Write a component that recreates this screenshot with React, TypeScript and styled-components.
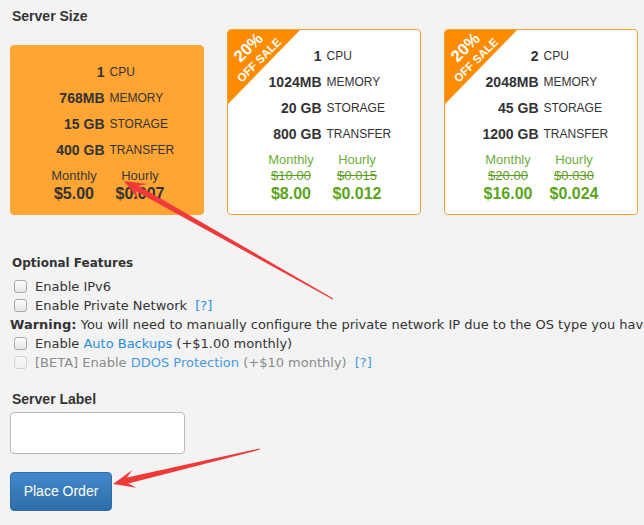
import React from 'react';
import styled, { createGlobalStyle } from 'styled-components';

type Plan = {
  cpu: string;
  memory: string;
  storage: string;
  transfer: string;
  monthly: string;
  hourly: string;
  oldMonthly?: string;
  oldHourly?: string;
};

const plans: Plan[] = [
  { cpu: '1', memory: '768MB', storage: '15 GB', transfer: '400 GB', monthly: '$5.00', hourly: '$0.007' },
  {
    cpu: '1',
    memory: '1024MB',
    storage: '20 GB',
    transfer: '800 GB',
    monthly: '$8.00',
    hourly: '$0.012',
    oldMonthly: '$10.00',
    oldHourly: '$0.015',
  },
  {
    cpu: '2',
    memory: '2048MB',
    storage: '45 GB',
    transfer: '1200 GB',
    monthly: '$16.00',
    hourly: '$0.024',
    oldMonthly: '$20.00',
    oldHourly: '$0.030',
  },
];

type Pt = [number, number];

// tapered annotation arrow, thin at the tail and wide at the head
const arrowPoints = (tail: Pt, tip: Pt): string => {
  const dx = tip[0] - tail[0];
  const dy = tip[1] - tail[1];
  const len = Math.sqrt(dx * dx + dy * dy);
  const d: Pt = [dx / len, dy / len];
  const n: Pt = [-d[1], d[0]];
  const at = (p: Pt, back: number, side: number): string =>
    `${(p[0] - d[0] * back + n[0] * side).toFixed(1)},${(p[1] - d[1] * back + n[1] * side).toFixed(1)}`;
  return [
    at(tail, 0, 0.6),
    at(tip, 15, 3),
    at(tip, 22, 9),
    at(tip, 0, 0),
    at(tip, 22, -9),
    at(tip, 15, -3),
    at(tail, 0, -0.6),
  ].join(' ');
};

const App: React.FC = () => {
  return (
    <>
      <GlobalStyle />
      <Page>
        <SizeTitle>Server Size</SizeTitle>
        <CardRow>
          {plans.map((plan, i) => {
            const sale = !!plan.oldMonthly;
            return (
              <Card key={i} selected={!sale}>
                {sale && (
                  <Ribbon width="80" height="80" viewBox="0 0 80 80">
                    <polygon points="0,0 72,0 0,74" fill="#ff8b00" />
                    <text
                      x="20"
                      y="17"
                      fill="#fff"
                      fontSize="16.5"
                      fontWeight="bold"
                      textAnchor="middle"
                      dominantBaseline="central"
                      transform="rotate(-45 20 17)"
                    >
                      20%
                    </text>
                    <text
                      x="31"
                      y="30"
                      fill="#fff"
                      fontSize="11.5"
                      fontWeight="bold"
                      textAnchor="middle"
                      dominantBaseline="central"
                      transform="rotate(-45 31 30)"
                    >
                      OFF SALE
                    </text>
                  </Ribbon>
                )}
                <Specs>
                  <SpecValue>{plan.cpu}</SpecValue>
                  <SpecName>CPU</SpecName>
                  <SpecValue>{plan.memory}</SpecValue>
                  <SpecName>MEMORY</SpecName>
                  <SpecValue>{plan.storage}</SpecValue>
                  <SpecName>STORAGE</SpecName>
                  <SpecValue>{plan.transfer}</SpecValue>
                  <SpecName>TRANSFER</SpecName>
                </Specs>
                <Prices>
                  <PriceCol>
                    <PriceLabel sale={sale}>Monthly</PriceLabel>
                    {sale && <OldPrice>{plan.oldMonthly}</OldPrice>}
                    <Price sale={sale}>{plan.monthly}</Price>
                  </PriceCol>
                  <PriceCol>
                    <PriceLabel sale={sale}>Hourly</PriceLabel>
                    {sale && <OldPrice>{plan.oldHourly}</OldPrice>}
                    <Price sale={sale}>{plan.hourly}</Price>
                  </PriceCol>
                </Prices>
              </Card>
            );
          })}
        </CardRow>

        <SectionTitle>Optional Features</SectionTitle>
        <Options>
          <Option>
            <Check type="checkbox" />
            Enable IPv6
          </Option>
          <Option>
            <Check type="checkbox" />
            Enable Private Network<Help href="#">[?]</Help>
          </Option>
          <Warning>
            <b>Warning:</b> You will need to manually configure the private network IP due to the OS type you have
            selected.
          </Warning>
          <Option>
            <Check type="checkbox" />
            Enable&nbsp;<Link href="#">Auto Backups</Link>&nbsp;(+$1.00 monthly)
          </Option>
          <Option disabled>
            <Check type="checkbox" disabled />
            [BETA] Enable&nbsp;<Link href="#">DDOS Protection</Link>&nbsp;(+$10 monthly)
            <Help href="#">[?]</Help>
          </Option>
        </Options>

        <LabelTitle>Server Label</LabelTitle>
        <LabelInput type="text" />
        <OrderButton>Place Order</OrderButton>

        <Arrows width="644" height="525" viewBox="0 0 644 525">
          <polygon points={arrowPoints([333, 299], [124, 181])} fill="#f03a3a" />
          <polygon points={arrowPoints([260, 449], [113, 484])} fill="#f03a3a" />
        </Arrows>
      </Page>
    </>
  );
};

const GlobalStyle = createGlobalStyle`
  html, body {
    margin: 0;
    background: #f3f3f3;
    overflow: hidden;
  }
  body {
    font-family: "Liberation Sans", Arial, sans-serif;
    color: #333333;
  }
`;

const Page = styled.div`
  position: relative;
  width: 644px;
  height: 525px;
  box-sizing: border-box;
  padding: 6px 0 0 10px;
  overflow: hidden;
`;

const SizeTitle = styled.div`
  font-size: 14px;
  font-weight: bold;
  line-height: 20px;
  margin: 0 0 3px 2px;
`;

const CardRow = styled.div`
  display: flex;
  align-items: flex-end;
  gap: 23px;
`;

const Card = styled.div<{ selected: boolean }>`
  position: relative;
  overflow: hidden;
  width: 194px;
  box-sizing: border-box;
  padding: 13px 0 10px;
  border-radius: 4px;
  border: 1px solid ${p => (p.selected ? '#ffa534' : '#f4a232')};
  background: ${p => (p.selected ? '#ffa534' : '#ffffff')};
`;

const Ribbon = styled.svg`
  position: absolute;
  top: 0;
  left: 0;
  font-family: "Liberation Sans", Arial, sans-serif;
`;

const Specs = styled.div`
  display: grid;
  grid-template-columns: 1fr 1fr;
  column-gap: 5px;
  align-items: center;
`;

const SpecValue = styled.span`
  text-align: right;
  font-size: 14px;
  font-weight: bold;
  line-height: 26px;
  color: #333333;
`;

const SpecName = styled.span`
  text-align: left;
  font-size: 12px;
  line-height: 26px;
  color: #333333;
`;

const Prices = styled.div`
  display: grid;
  grid-template-columns: 66px 66px;
  justify-content: center;
  margin-top: 5px;
`;

const PriceCol = styled.div`
  display: flex;
  flex-direction: column;
  align-items: center;
`;

const PriceLabel = styled.span<{ sale: boolean }>`
  font-size: 13px;
  line-height: 16px;
  color: ${p => (p.sale ? '#6cae3c' : '#3a3a3a')};
`;

const OldPrice = styled.s`
  font-size: 13px;
  line-height: 16px;
  color: #5b9e1c;
`;

const Price = styled.span<{ sale: boolean }>`
  font-size: 16px;
  font-weight: bold;
  line-height: 20px;
  color: ${p => (p.sale ? '#5aa51b' : '#333333')};
  white-space: nowrap;
`;

const SectionTitle = styled.div`
  margin: 38px 0 4px 2px;
  font-family: "DejaVu Sans", Verdana, sans-serif;
  font-size: 12px;
  font-weight: bold;
  line-height: 20px;
`;

const Options = styled.div`
  font-family: "DejaVu Sans", Verdana, sans-serif;
  font-size: 13px;
  line-height: 19px;
`;

const Option = styled.div<{ disabled?: boolean }>`
  display: flex;
  align-items: center;
  white-space: nowrap;
  color: ${p => (p.disabled ? '#8a8a8a' : '#333333')};
  a {
    opacity: ${p => (p.disabled ? 0.85 : 1)};
  }
`;

const Check = styled.input`
  appearance: none;
  width: 13px;
  height: 13px;
  box-sizing: border-box;
  margin: 0 8px 0 4px;
  border: 1px solid #a9a9a9;
  border-radius: 3px;
  background: linear-gradient(#fdfdfd, #e6e6e6);
  &:disabled {
    border-color: #d2d2d2;
    background: linear-gradient(#f9f9f9, #efefef);
  }
`;

const Link = styled.a`
  color: #2a8bdc;
  text-decoration: none;
`;

const Help = styled(Link)`
  margin-left: 8px;
`;

const Warning = styled.div`
  white-space: nowrap;
  color: #333333;
`;

const LabelTitle = styled.div`
  margin: 17px 0 3px 2px;
  font-size: 14px;
  font-weight: bold;
  line-height: 20px;
`;

const LabelInput = styled.input`
  display: block;
  width: 175px;
  height: 42px;
  box-sizing: border-box;
  border: 1px solid #b3bac1;
  border-radius: 4px;
  background: #ffffff;
  outline: none;
`;

const OrderButton = styled.button`
  display: block;
  margin-top: 18px;
  width: 102px;
  height: 39px;
  box-sizing: border-box;
  border: 1px solid #2d6ca6;
  border-radius: 4px;
  background: linear-gradient(#4289cd, #2f6da8);
  color: #ffffff;
  font-family: "Liberation Sans", Arial, sans-serif;
  font-size: 14px;
  padding: 0 0 2px;
`;

const Arrows = styled.svg`
  position: absolute;
  top: 0;
  left: 0;
  pointer-events: none;
`;

export default App;
